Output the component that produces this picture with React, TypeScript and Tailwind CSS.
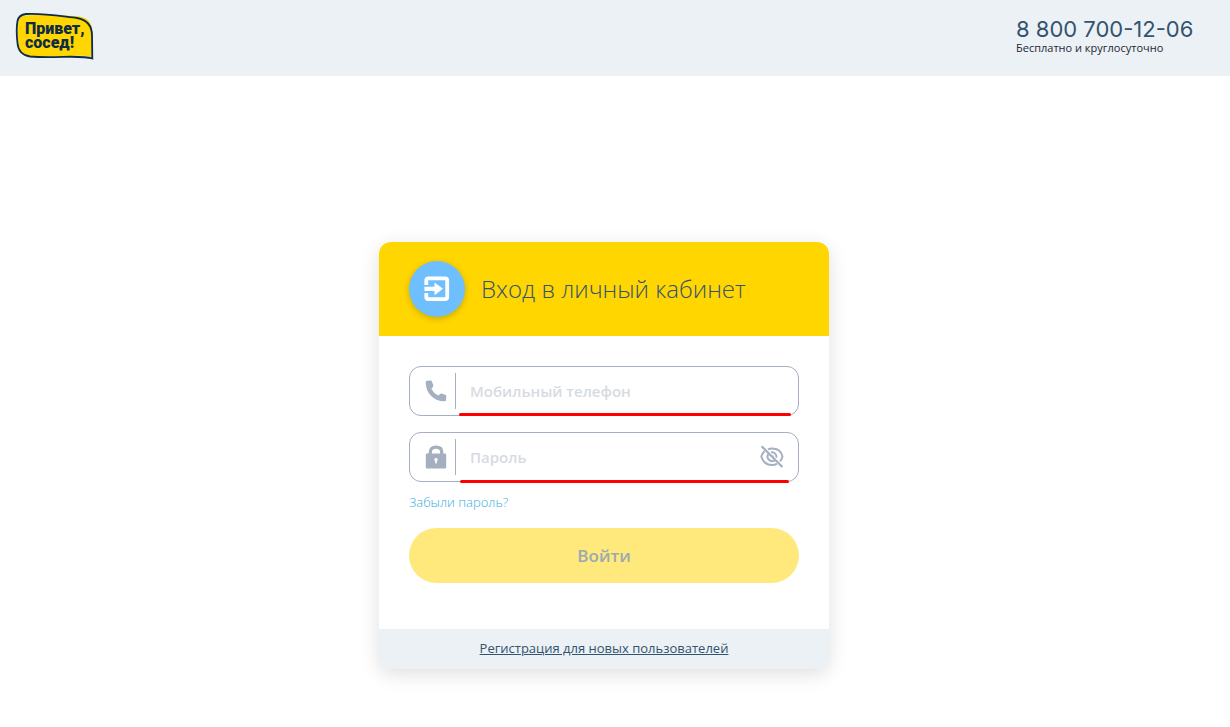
import { useState } from "react";

function Logo() {
  return (
    <svg width="80" height="50" viewBox="0 0 80 50" role="img" aria-label="Привет, сосед!" className="block">
      <path
        d="M11 3.500C27 1.500 52 3.500 65 4.500C75 6.500 77.500 13 77.500 23L76.500 45C64 42 43 46 15 45C7 43.500 4 38 3.500 31C2.500 23 2.500 16 3.500 10C4.500 5 7 4 11 3.500Z"
        fill="#ffd600"
      />
      <path
        d="M11 2C27 .8 48 4.500 62 6C73 8 77 14 77 23.500L77.300 46.500C65 42.500 42 46.500 15 44.500C6 43 3 38 2.500 31C1.500 23 1.500 15 2.500 9C3.500 4.500 6 2.500 11 2Z"
        fill="none"
        stroke="#0f2c45"
        strokeWidth="1.800"
      />
      <g fill="#0f2c45" className="font-['Roboto',sans-serif] font-black">
        <text x="10" y="22" fontSize="16">Привет,</text>
        <text x="10" y="36" fontSize="16">сосед!</text>
      </g>
    </svg>
  );
}

function EnterIcon() {
  return (
    <svg width="26" height="26" viewBox="0 0 26 26" fill="none" aria-hidden="true">
      <path d="M2.300 9V4.500Q2.300 2.300 4.500 2.300H21Q23.200 2.300 23.200 4.500V21Q23.200 23.200 21 23.200H4.500Q2.300 23.200 2.300 21V17" stroke="#fff" strokeWidth="3.800" />
      <path d="M.4 10.800H10.500V6.500L19 12.800L10.500 19.200V14.900H.4Z" fill="#fff" />
    </svg>
  );
}

function PhoneIcon() {
  return (
    <svg width="22" height="22" viewBox="0 0 22 22" aria-hidden="true">
      <path
        fill="#a4afbf"
        d="M2 .8L5.500.6Q6.500.5 6.900 1.500L8.300 5.200Q8.600 6 8 6.700L6.300 8.700Q8.600 13.200 13.200 15.600L15.200 13.900Q15.900 13.300 16.700 13.600L20.500 15Q21.400 15.400 21.300 16.400L21 20Q20.900 21.200 19.700 21.200Q11.500 21.300 6 15.700Q.6 10 .7 2.200Q.7.900 2 .8Z"
      />
    </svg>
  );
}

function LockIcon() {
  return (
    <svg width="22" height="24" viewBox="0 0 22 24" aria-hidden="true">
      <path d="M5.300 9V7Q5.300 2.200 11 2.200Q16.700 2.200 16.700 7V9" fill="none" stroke="#a4afbf" strokeWidth="3.300" />
      <path
        fillRule="evenodd"
        fill="#a4afbf"
        d="M2 8.500H20Q21.200 8.500 21.200 9.800V22.200Q21.200 23.500 20 23.500H2Q.8 23.500 .8 22.200V9.800Q.8 8.500 2 8.500ZM11 13A1.700 1.700 0 0 0 10.200 16.200V18.500H11.800V16.200A1.700 1.700 0 0 0 11 13Z"
      />
    </svg>
  );
}

function EyeIcon({ crossed }: { crossed: boolean }) {
  return (
    <svg width="24" height="24" viewBox="0 0 24 24" fill="none" stroke="#a4afbf" strokeWidth="2" aria-hidden="true">
      <path d="M8 4.300Q9.900 3.500 12 3.500C17.800 3.500 21.500 7 22.500 11.500Q21.800 14.300 20 16.200" />
      <path d="M4.500 6.300Q2.200 8.500 1.300 11.500C2.800 16.500 6.500 20 12 20Q14.800 20 17 18.900" />
      <path d="M11 7.400A4.500 4.500 0 0 1 16.400 12.800M8.400 9A4.500 4.500 0 0 0 14.600 15.300" />
      <path d="M12.500 10.500Q13.400 10.800 13.500 11.800" strokeWidth="1.300" />
      {crossed && <path d="M1.600 1.300L22.400 22" strokeWidth="2.300" />}
    </svg>
  );
}

const fieldClass = "relative flex h-[50px] items-center rounded-xl border border-[#a4afbf] bg-white";
const iconLabelClass = "flex h-9 w-[46px] items-center justify-center border-r border-[#a4afbf] pl-1.5";
const inputClass =
  "h-full min-w-0 flex-1 bg-transparent px-3.5 text-[15px] font-semibold text-[#34536f] outline-none placeholder:text-[#d6dbe1]";

export default function App() {
  const [shown, setShown] = useState(false);
  return (
    <div className="min-h-screen bg-white font-['Open_Sans',sans-serif] text-[#34536f]">
      <header className="flex h-[76px] items-start justify-between bg-[#ebf1f5] pl-[15px] pr-[38px] pt-3">
        <a href="#">
          <Logo />
        </a>
        <div className="w-44">
          <a href="tel:88007001206" className="mt-1 block whitespace-nowrap font-['Inter',sans-serif] text-[22px] leading-[26px]">
            8 800 700-12-06
          </a>
          <p className="text-[11px] leading-3 text-[#1d2733]">Бесплатно и круглосуточно</p>
        </div>
      </header>

      <main className="flex justify-center pb-12 pr-[22px] pt-[166px]">
        <section className="w-full max-w-[450px] overflow-hidden rounded-xl bg-white shadow-[0_5px_20px_rgba(0,0,0,0.13)]">
          <div className="flex h-[94px] items-center gap-4 bg-[#ffd600] px-[30px]">
            <span className="flex size-14 items-center justify-center rounded-full bg-[#6fbfff] shadow-[0_2px_6px_rgba(0,0,0,0.2)]">
              <EnterIcon />
            </span>
            <h1 className="whitespace-nowrap text-2xl font-light">Вход в личный кабинет</h1>
          </div>

          <form className="px-[30px] pb-[46px] pt-[30px]" onSubmit={(e) => e.preventDefault()}>
            <div className={fieldClass}>
              <label htmlFor="phone" aria-label="Мобильный телефон" className={iconLabelClass}>
                <PhoneIcon />
              </label>
              <input id="phone" type="tel" placeholder="Мобильный телефон" className={inputClass} />
              <span className="absolute -bottom-px left-[49px] right-[7px] h-[3px] rounded-full bg-[#ff0000]" />
            </div>

            <div className={`${fieldClass} mt-4`}>
              <label htmlFor="password" aria-label="Пароль" className={iconLabelClass}>
                <LockIcon />
              </label>
              <input id="password" type={shown ? "text" : "password"} placeholder="Пароль" className={inputClass} />
              <button type="button" aria-label="Показать пароль" onClick={() => setShown(!shown)} className="mr-3.5">
                <EyeIcon crossed={!shown} />
              </button>
              <span className="absolute -bottom-0.5 left-[50px] right-[9px] h-[3px] rounded-full bg-[#ff0000]" />
            </div>

            <a href="#" className="mt-2.5 block w-fit text-[13px] leading-5 font-light text-[#35aee2]">
              Забыли пароль?
            </a>
            <button type="submit" className="mt-4 block h-[55px] w-full rounded-full bg-[#ffe97c] text-[17px] font-semibold text-[#9ba9b3]">
              Войти
            </button>
          </form>

          <div className="flex h-10 items-center justify-center bg-[#ebf1f5]">
            <a href="#" className="text-[13px] underline">
              Регистрация для новых пользователей
            </a>
          </div>
        </section>
      </main>
    </div>
  );
}
